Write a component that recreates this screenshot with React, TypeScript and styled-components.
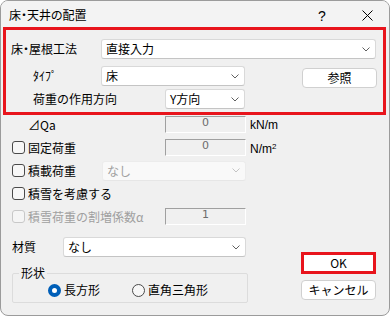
import React from "react";
import styled, { createGlobalStyle } from "styled-components";

const GlobalStyle = createGlobalStyle`
  html, body {
    margin: 0;
    padding: 0;
    background: #ffffff;
  }
  body {
    font-family: "Noto Sans CJK JP", "Noto Sans", sans-serif;
    font-size: 12px;
    color: #000000;
  }
  * {
    box-sizing: border-box;
  }
`;

const Window = styled.div`
  width: 390px;
  height: 316px;
  border: 1px solid #9b9b9b;
  border-radius: 8px;
  background: #f0f0f0;
  overflow: hidden;
  display: flex;
  flex-direction: column;
`;

const TitleBar = styled.div`
  height: 26px;
  flex-shrink: 0;
  display: flex;
  align-items: center;
  padding-left: 8px;
  background: #f3f3f3;
`;

const Title = styled.span`
  line-height: 14px;
  margin-top: 2px;
  font-feature-settings: "palt";
`;

const Caps = styled.div`
  margin-left: auto;
  display: flex;
  height: 100%;
`;

const CapButton = styled.div<{ $w: number }>`
  width: ${(p) => p.$w}px;
  display: flex;
  align-items: center;
  justify-content: center;
  padding-top: 3px;
  font-family: "Liberation Sans", sans-serif;
  font-size: 14px;
`;

const Highlight = styled.div`
  margin-left: 2px;
  width: 383px;
  height: 88px;
  flex-shrink: 0;
  border: 3px solid #e8141c;
  padding: 9px 0 0 5px;
`;

const Row = styled.div<{ $h?: number; $top?: number }>`
  display: flex;
  align-items: center;
  height: ${(p) => p.$h ?? 17}px;
  margin-top: ${(p) => p.$top ?? 0}px;
`;

const Caption = styled.span<{ $w?: number; $indent?: number; $off?: boolean; $tight?: boolean }>`
  width: ${(p) => (p.$w ? `${p.$w}px` : "auto")};
  padding-left: ${(p) => p.$indent ?? 0}px;
  flex-shrink: 0;
  line-height: 14px;
  white-space: nowrap;
  color: ${(p) => (p.$off ? "#a0a0a0" : "#000000")};
  font-feature-settings: ${(p) => (p.$tight ? '"palt"' : "normal")};
`;

const Combo = styled.div<{ $w: number; $off?: boolean }>`
  width: ${(p) => p.$w}px;
  height: 20px;
  flex-shrink: 0;
  display: flex;
  align-items: center;
  padding: 0 5px 0 4px;
  background: ${(p) => (p.$off ? "#f9f9f9" : "#ffffff")};
  border: 1px solid ${(p) => (p.$off ? "#ececec" : "#d9d9d9")};
  border-bottom-color: ${(p) => (p.$off ? "#e6e6e6" : "#c4c4c4")};
  border-radius: 3px;
  color: ${(p) => (p.$off ? "#a0a0a0" : "#000000")};
  span {
    flex: 1;
    line-height: 14px;
  }
`;

const PushButton = styled.div<{ $mark?: boolean }>`
  width: 75px;
  height: ${(p) => (p.$mark ? 22 : 20)}px;
  display: flex;
  align-items: center;
  justify-content: center;
  background: #ffffff;
  border: ${(p) => (p.$mark ? "3px solid #e8141c" : "1px solid #d0d0d0")};
  border-radius: ${(p) => (p.$mark ? 0 : 4)}px;
  line-height: 14px;
`;

const RefButton = styled(PushButton)`
  margin-left: 57px;
  margin-top: 3px;
  align-self: flex-start;
`;

const Fields = styled.div`
  padding-left: 11px;
  margin-top: 1px;
  display: flex;
  flex-direction: column;
  gap: 6px;
`;

const Edit = styled.div`
  width: 81px;
  height: 17px;
  flex-shrink: 0;
  border: 1px solid #ffffff;
  border-top-color: #a0a0a0;
  border-left-color: #a0a0a0;
  background: #f0f0f0;
  color: #6d6d6d;
  text-align: center;
  font-family: "DejaVu Sans", sans-serif;
  font-size: 11px;
  line-height: 11px;
`;

const Unit = styled.span`
  margin-left: 4px;
  font-family: "Liberation Sans", sans-serif;
  font-size: 12px;
  line-height: 14px;
  sup {
    font-size: 8px;
    vertical-align: 4px;
  }
`;

const Box = styled.span<{ $off?: boolean }>`
  width: 13px;
  height: 13px;
  flex-shrink: 0;
  margin-right: 3px;
  border: 1px solid ${(p) => (p.$off ? "#c8c8c8" : "#4a4a4a")};
  border-radius: 3px;
  background: ${(p) => (p.$off ? "#f5f5f5" : "#f7f7f7")};
`;

const Bottom = styled.div`
  display: flex;
  padding-left: 11px;
  margin-top: 12px;
`;

const LeftCol = styled.div`
  display: flex;
  flex-direction: column;
`;

const RightCol = styled.div`
  display: flex;
  flex-direction: column;
  gap: 6px;
  margin-left: 53px;
  margin-top: 15px;
`;

const Frame = styled.fieldset`
  margin: 9px 0 0 0;
  width: 236px;
  padding: 0 0 2px 6px;
  border: 1px solid #dcdcdc;
  border-radius: 2px;
  legend {
    margin: 0;
    padding: 0 2px;
    line-height: 14px;
  }
`;

const Choices = styled.div`
  display: flex;
  align-items: center;
  height: 20px;
  padding-left: 29px;
`;

const Choice = styled.label`
  display: flex;
  align-items: center;
  margin-right: 32px;
  line-height: 14px;
`;

const Dot = styled.span<{ $on?: boolean }>`
  width: 13px;
  height: 13px;
  margin-right: 3px;
  border-radius: 50%;
  border: ${(p) => (p.$on ? "4px solid #005fb8" : "1px solid #4a4a4a")};
  background: ${(p) => (p.$on ? "#ffffff" : "#f7f7f7")};
`;

const Chevron = ({ off }: { off?: boolean }) => (
  <svg width="8" height="5" viewBox="0 0 8 5">
    <polyline
      points="0.5,0.5 4,4 7.5,0.5"
      fill="none"
      stroke={off ? "#c4c4c4" : "#606060"}
      strokeWidth="1"
    />
  </svg>
);

const Select = ({ w, text, off }: { w: number; text: string; off?: boolean }) => (
  <Combo $w={w} $off={off}>
    <span>{text}</span>
    <Chevron off={off} />
  </Combo>
);

const App = () => {
  return (
    <>
      <GlobalStyle />
      <Window>
        <TitleBar>
          <Title>床・天井の配置</Title>
          <Caps>
            <CapButton $w={46}>?</CapButton>
            <CapButton $w={44}>
              <svg width="11" height="11" viewBox="0 0 11 11">
                <path d="M0.5 0.5 L10.5 10.5 M10.5 0.5 L0.5 10.5" stroke="#000" strokeWidth="1" />
              </svg>
            </CapButton>
          </Caps>
        </TitleBar>

        <Highlight>
          <Row $h={20}>
            <Caption $w={90} $tight>
              床・屋根工法
            </Caption>
            <Select w={275} text="直接入力" />
          </Row>
          <Row $h={22} $top={6}>
            <Caption $w={90} $indent={22}>
              ﾀｲﾌﾟ
            </Caption>
            <Select w={144} text="床" />
            <RefButton>参照</RefButton>
          </Row>
          <Row $h={20} $top={2}>
            <Caption $w={154} $indent={22}>
              荷重の作用方向
            </Caption>
            <Select w={80} text="Y方向" />
          </Row>
        </Highlight>

        <Fields>
          <Row>
            <Caption $w={153} $indent={16}>
              ⊿Qa
            </Caption>
            <Edit>0</Edit>
            <Unit>kN/m</Unit>
          </Row>
          <Row>
            <Box />
            <Caption $w={137}>固定荷重</Caption>
            <Edit>0</Edit>
            <Unit>
              N/m<sup>2</sup>
            </Unit>
          </Row>
          <Row>
            <Box />
            <Caption $w={74}>積載荷重</Caption>
            <Select w={144} text="なし" off />
          </Row>
          <Row>
            <Box />
            <Caption>積雪を考慮する</Caption>
          </Row>
          <Row>
            <Box $off />
            <Caption $w={137} $off>
              積雪荷重の割増係数α
            </Caption>
            <Edit>1</Edit>
          </Row>
        </Fields>

        <Bottom>
          <LeftCol>
            <Row $h={20}>
              <Caption $w={51}>材質</Caption>
              <Select w={183} text="なし" />
            </Row>
            <Frame>
              <legend>形状</legend>
              <Choices>
                <Choice>
                  <Dot $on />
                  長方形
                </Choice>
                <Choice>
                  <Dot />
                  直角三角形
                </Choice>
              </Choices>
            </Frame>
          </LeftCol>
          <RightCol>
            <PushButton $mark>OK</PushButton>
            <PushButton>キャンセル</PushButton>
          </RightCol>
        </Bottom>
      </Window>
    </>
  );
};

export default App;
